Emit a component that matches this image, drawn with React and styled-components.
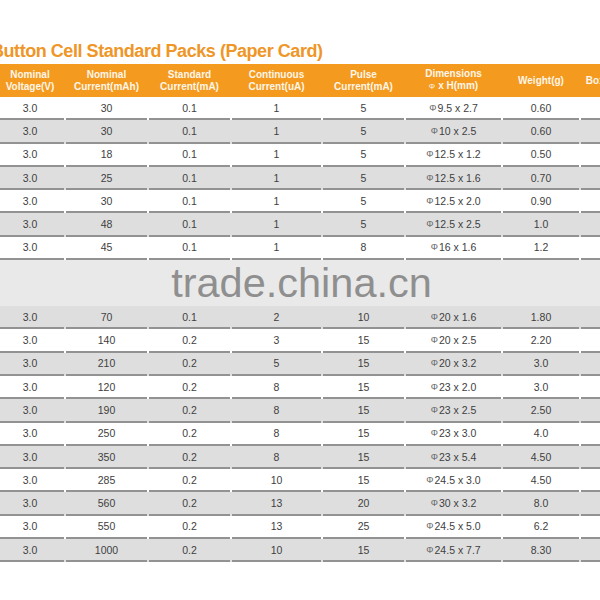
import React from "react";
import styled, { createGlobalStyle } from "styled-components";

const GlobalStyle = createGlobalStyle`
    html, body {
        margin: 0;
        padding: 0;
        background: #ffffff;
        overflow: hidden;
    }
    body {
        font-family: "Liberation Sans", Arial, sans-serif;
    }
`;

const COLS = "70px 83px 83px 91px 83px 97px 78px 50px";

const Page = styled.div`
    width: 635px;
    margin-left: -5px;
`;

const Title = styled.h1`
    margin: 0 0 0 -4px;
    padding-top: 40px;
    height: 24px;
    box-sizing: content-box;
    font-size: 18px;
    line-height: 22px;
    letter-spacing: -0.45px;
    font-weight: bold;
    color: #ef9628;
    white-space: nowrap;
`;

const HeaderRow = styled.div`
    display: grid;
    grid-template-columns: ${COLS};
    height: 33px;
    background: #f39a1f;
`;

const HeadCell = styled.div`
    display: flex;
    flex-direction: column;
    align-items: center;
    justify-content: center;
    font-size: 10px;
    line-height: 12px;
    font-weight: bold;
    color: #fff6e8;
    text-align: center;
    white-space: nowrap;
`;

const PhiHead = styled.span`
    font-weight: normal;
    font-size: 8px;
    margin-right: 3px;
`;

const Row = styled.div`
    display: grid;
    grid-template-columns: ${COLS};
    height: 23.3px;
    background: ${(p) => (p.$shaded ? "#dedede" : "#ffffff")};
`;

const Cell = styled.div`
    display: flex;
    align-items: center;
    justify-content: center;
    padding-bottom: 2px;
    box-sizing: border-box;
    font-size: 10.5px;
    color: #3e3e3e;
    white-space: nowrap;
    background: linear-gradient(#929292, #929292) no-repeat 1px 100% / calc(100% - 2px) 2px;
`;

const Phi = styled.span`
    font-size: 9px;
    color: #666;
    margin-right: 1px;
`;

const Band = styled.div`
    height: 46px;
    background: #e9e9e9;
    display: flex;
    justify-content: center;
    padding-right: 22px;
    font-size: 41.5px;
    line-height: 46px;
    color: #8f8f8f;
`;

const top = [
    ["30", "0.1", "1", "5", "9.5 x 2.7", "0.60"],
    ["30", "0.1", "1", "5", "10 x 2.5", "0.60"],
    ["18", "0.1", "1", "5", "12.5 x 1.2", "0.50"],
    ["25", "0.1", "1", "5", "12.5 x 1.6", "0.70"],
    ["30", "0.1", "1", "5", "12.5 x 2.0", "0.90"],
    ["48", "0.1", "1", "5", "12.5 x 2.5", "1.0"],
    ["45", "0.1", "1", "8", "16 x 1.6", "1.2"],
];

const bottom = [
    ["70", "0.1", "2", "10", "20 x 1.6", "1.80"],
    ["140", "0.2", "3", "15", "20 x 2.5", "2.20"],
    ["210", "0.2", "5", "15", "20 x 3.2", "3.0"],
    ["120", "0.2", "8", "15", "23 x 2.0", "3.0"],
    ["190", "0.2", "8", "15", "23 x 2.5", "2.50"],
    ["250", "0.2", "8", "15", "23 x 3.0", "4.0"],
    ["350", "0.2", "8", "15", "23 x 5.4", "4.50"],
    ["285", "0.2", "10", "15", "24.5 x 3.0", "4.50"],
    ["560", "0.2", "13", "20", "30 x 3.2", "8.0"],
    ["550", "0.2", "13", "25", "24.5 x 5.0", "6.2"],
    ["1000", "0.2", "10", "15", "24.5 x 7.7", "8.30"],
];

const DataRow = ({ data, shaded }) => (
    <Row $shaded={shaded}>
        <Cell>3.0</Cell>
        <Cell>{data[0]}</Cell>
        <Cell>{data[1]}</Cell>
        <Cell>{data[2]}</Cell>
        <Cell>{data[3]}</Cell>
        <Cell><Phi>Φ</Phi>{data[4]}</Cell>
        <Cell>{data[5]}</Cell>
        <Cell></Cell>
    </Row>
);

export default function App() {
    return (
        <Page>
            <GlobalStyle />
            <Title>Button Cell Standard Packs (Paper Card)</Title>
            <HeaderRow>
                <HeadCell><span>Nominal</span><span>Voltage(V)</span></HeadCell>
                <HeadCell><span>Nominal</span><span>Current(mAh)</span></HeadCell>
                <HeadCell><span>Standard</span><span>Current(mA)</span></HeadCell>
                <HeadCell><span>Continuous</span><span>Current(uA)</span></HeadCell>
                <HeadCell><span>Pulse</span><span>Current(mA)</span></HeadCell>
                <HeadCell><span>Dimensions</span><span><PhiHead>Φ</PhiHead>x H(mm)</span></HeadCell>
                <HeadCell><span>Weight(g)</span></HeadCell>
                <HeadCell><span>Box Qty</span></HeadCell>
            </HeaderRow>
            {top.map((d, i) => (
                <DataRow key={i} data={d} shaded={i % 2 === 1} />
            ))}
            <Band>trade.china.cn</Band>
            {bottom.map((d, i) => (
                <DataRow key={i} data={d} shaded={i % 2 === 0} />
            ))}
        </Page>
    );
}
